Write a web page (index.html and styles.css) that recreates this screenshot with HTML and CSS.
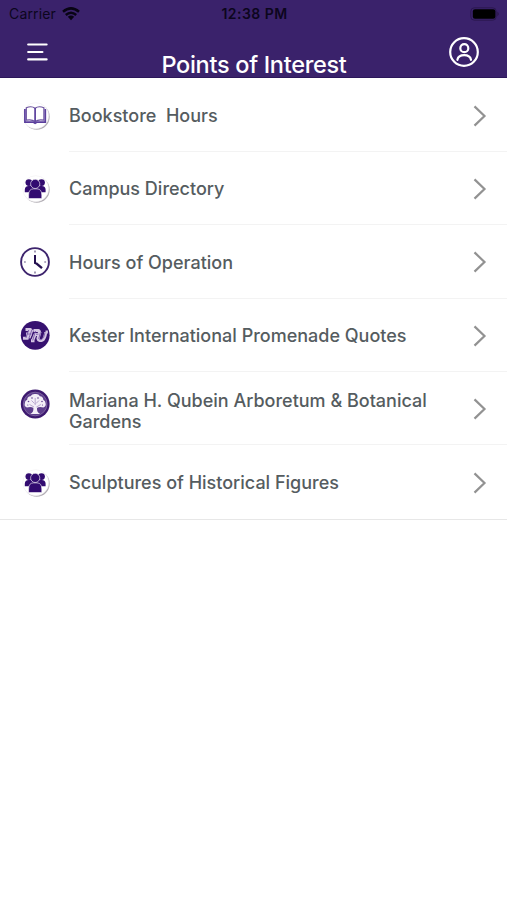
FILE: index.html
```html
<!DOCTYPE html>
<html lang="en">
<head>
<meta charset="utf-8">
<title>Points of Interest</title>
<link rel="stylesheet" href="styles.css">
</head>
<body>
<svg class="defs" aria-hidden="true">
  <symbol id="people" viewBox="0 0 34 34">
    <circle cx="18.7" cy="18.8" r="13" fill="#b3afb6"/>
    <circle cx="17.7" cy="17.7" r="13" fill="#fff" stroke="#eeecef" stroke-width=".5"/>
    <g fill="#320b70">
      <circle cx="10.9" cy="11.6" r="3.4"/><circle cx="23.5" cy="11.6" r="3.4"/>
      <path d="M6.8 21.2v-2.4q0-3.8 3.9-3.8h13q3.9 0 3.9 3.8v2.4z"/>
    </g>
    <g fill="#320b70" stroke="#fff" stroke-width=".6">
      <circle cx="17.2" cy="12.9" r="4.6"/>
      <path d="M10.6 27.6v-3.5q0-6.2 4.8-6.2h3.6q4.8 0 4.8 6.2v3.5z"/>
    </g>
  </symbol>
  <symbol id="chevron" viewBox="0 0 14 22">
    <path d="M1.5 1.4 11.5 11 1.5 20.6" fill="none" stroke="#929292" stroke-width="2.2"/>
  </symbol>
</svg>
<header class="header">
  <div class="status">
    <div class="carrier">
      <span>Carrier</span>
      <svg class="wifi" viewBox="0 0 18 14" fill="none" stroke="#080414" stroke-width="2.5">
        <path d="M1 4.8Q9-2 17 4.8M3.8 8Q9 3.6 14.2 8"/>
        <path d="M5.8 9.7Q9 7.2 12.2 9.7L9 13.2z" fill="#080414" stroke="none"/>
      </svg>
    </div>
    <div class="time">12:38 PM</div>
    <svg class="battery" viewBox="0 0 30 14">
      <rect x=".8" y=".8" width="25.4" height="12.4" rx="3.5" fill="none" stroke="#2b184f"/>
      <rect x="2.8" y="2.3" width="22.6" height="9.4" rx="2.2" fill="#000"/>
      <path d="M27.5 4.6q2.2 2.4 0 4.8z" fill="#24133f"/>
    </svg>
  </div>
  <div class="nav">
    <svg class="menu" viewBox="0 0 21 20" stroke="#fff" stroke-width="2.2" stroke-linecap="round">
      <path d="M1.2 2.5h18.4M1.2 10h14.2M1.2 17.4h18.4"/>
    </svg>
    <h1 class="title">Points of Interest</h1>
    <svg class="profile" viewBox="0 0 32 32" fill="none" stroke="#fff" stroke-width="2.2" stroke-linecap="round">
      <circle cx="16" cy="16" r="13.8"/><circle cx="16.3" cy="12.2" r="4"/>
      <path d="M9.4 23.8c1.2-6.2 12.4-6.2 13.6 0"/>
    </svg>
  </div>
</header>
<main class="list">
  <div class="row">
    <svg class="icon" viewBox="0 0 34 34">
      <circle cx="18.7" cy="18.8" r="13" fill="#b3afb6"/>
      <circle cx="17.7" cy="17.7" r="13" fill="#fff" stroke="#eeecef" stroke-width=".5"/>
      <path d="M8.3 9.8Q13.5 7.5 17.1 10.3 20.7 7.5 25.9 9.8V22.2Q20.7 21 17.1 23.4 13.5 21 8.3 22.2z" fill="#fff" stroke="#6b529f" stroke-width="1.2"/>
      <path d="M17.1 10v13.6M6.9 11v13.2h8.6l1.6 1 1.6-1h8.6V11" fill="none" stroke="#5b3f9d" stroke-width="1.7"/>
    </svg>
    <div class="body"><span class="label">Bookstore&nbsp; Hours</span><svg class="chevron"><use href="#chevron"/></svg></div>
  </div>
  <div class="row">
    <svg class="icon"><use href="#people"/></svg>
    <div class="body"><span class="label">Campus Directory</span><svg class="chevron"><use href="#chevron"/></svg></div>
  </div>
  <div class="row">
    <svg class="icon" viewBox="0 0 34 34">
      <circle cx="17" cy="17" r="13.9" fill="#fff" stroke="#3d246d" stroke-width="1.9"/>
      <path d="M17 10v8l1.2.4" fill="none" stroke="#24104f" stroke-width="2"/>
      <path d="m18 18.2 6 5" stroke="#24104f" stroke-width="2.4"/>
      <path d="M17 5.5v2M17 26.5v2M6 17h1.8M26.3 17h1.8" stroke="#655783" stroke-width="1.2"/>
    </svg>
    <div class="body"><span class="label">Hours of Operation</span><svg class="chevron"><use href="#chevron"/></svg></div>
  </div>
  <div class="row">
    <svg class="icon" viewBox="0 0 34 34">
      <circle cx="17.2" cy="17.3" r="14.4" fill="#36116f"/>
      <g fill="none" stroke-linejoin="round">
        <path d="M7.5 11.5h5l-3 8.5M5 20.3h5.5M14 11.5l-3 8.5M8 16h6M15.5 12.5h5q2 1.5 0 4h-3.4l-2.5 6.3M13 22.8h3.5M22 13.5l-2 7q.8 3 4.4 1.6 2.4-1 3.4-8M27.5 14h2.4" stroke="#d3c5e2" stroke-width="3.1"/>
        <path d="M10.7 12l-2.8 8M14 11.5l-3 8.5M8.5 16h5M17.5 13l-2.8 9.5M18 16.2h2.4M22.5 14.5l-1.7 6q.8 2 3 1 2.2-1 3.2-7" stroke="#795aa8" stroke-width=".9"/>
      </g>
    </svg>
    <div class="body"><span class="label">Kester International Promenade Quotes</span><svg class="chevron"><use href="#chevron"/></svg></div>
  </div>
  <div class="row">
    <svg class="icon tree" viewBox="0 0 34 34">
      <circle cx="17.2" cy="17" r="14.4" fill="#3d196f"/>
      <circle cx="17.2" cy="17" r="11.8" fill="#5e3e8c" stroke="#8c77aa" stroke-width=".7"/>
      <path d="M12.2 27q3.6-1.5 3.2-6-2-1.8-6.5-.6-3-1-2.1-4.2 0-2.6 2.4-3.5.1-3.2 3.3-3.5Q14.3 6.600 17.200 7q3.200-.5 4.800 2.200 3.100.4 3.300 3.500 2.300 1 2.300 3.600.8 3-2.200 4.100-4.400-1.200-6.400.6-.4 4.500 3.200 6z" fill="#f3eef7"/>
      <path d="m17.200 18 0-7M16 20l-4.500-2.500M18.400 20l4.500-2.500M16.500 16.500l-3-3M18 16.500l3-3" fill="none" stroke="#a08bbd" stroke-width=".7"/>
      <g fill="#654493"><circle cx="14" cy="11" r=".8"/><circle cx="20" cy="11" r=".8"/><circle cx="10.500" cy="14.500" r=".8"/><circle cx="24" cy="14.500" r=".8"/><circle cx="9.800" cy="18" r=".6"/><circle cx="24.500" cy="18" r=".6"/></g>
    </svg>
    <div class="body"><span class="label two-line">Mariana H. Qubein Arboretum &amp; Botanical<br>Gardens</span><svg class="chevron"><use href="#chevron"/></svg></div>
  </div>
  <div class="row">
    <svg class="icon"><use href="#people"/></svg>
    <div class="body"><span class="label">Sculptures of Historical Figures</span><svg class="chevron"><use href="#chevron"/></svg></div>
  </div>
</main>
</body>
</html>
```
FILE: styles.css
```css
* { box-sizing: border-box; }
body { margin: 0; background: #fff; font-family: Inter, "Liberation Sans", sans-serif; }
.defs { display: none; }
.header { height: 78.4px; background: #3a226b; border-bottom: 1px solid #2c175a; }
.status { height: 27px; display: grid; grid-template-columns: 1fr 1fr 1fr; align-items: center; padding: 0 7px 0 9px; color: #0c061d; }
.carrier { display: flex; align-items: center; gap: 6px; font-size: 14px; letter-spacing: 0.15px; }
.wifi { width: 18px; height: 14px; }
.time { font-size: 14px; font-weight: 600; letter-spacing: 0.45px; text-align: center; white-space: nowrap; }
.battery { width: 30px; height: 14px; justify-self: end; }
.nav { height: 50px; display: grid; grid-template-columns: 58px 1fr 58px; }
.menu { width: 21px; height: 20px; margin: 15px 0 0 27px; }
.title { margin: 23px 0 0 1px; color: #fff; font-size: 23.5px; line-height: 30px; font-weight: 500; letter-spacing: -0.3px; text-align: center; white-space: nowrap; }
.profile { width: 32px; height: 32px; margin: 9px 0 0 -1px; }
.list { border-bottom: 1.5px solid #e7e7e7; }
.row { height: 73.4px; display: flex; align-items: center; padding-left: 18px; }
.icon { width: 34px; height: 34px; flex: none; }
.tree { margin-top: -9px; }
.body { flex: 1; height: 100%; margin-left: 17px; padding: 2px 20px 0 0; display: flex; align-items: center; justify-content: space-between; border-bottom: 1px solid #f3f3f3; }
.row:last-child .body { border-bottom: 0; }
.label { color: #555c60; font-size: 18px; line-height: 21.5px; font-weight: 500; white-space: nowrap; }
.two-line { padding-top: 4px; }
.chevron { width: 14px; height: 22px; flex: none; }
```
